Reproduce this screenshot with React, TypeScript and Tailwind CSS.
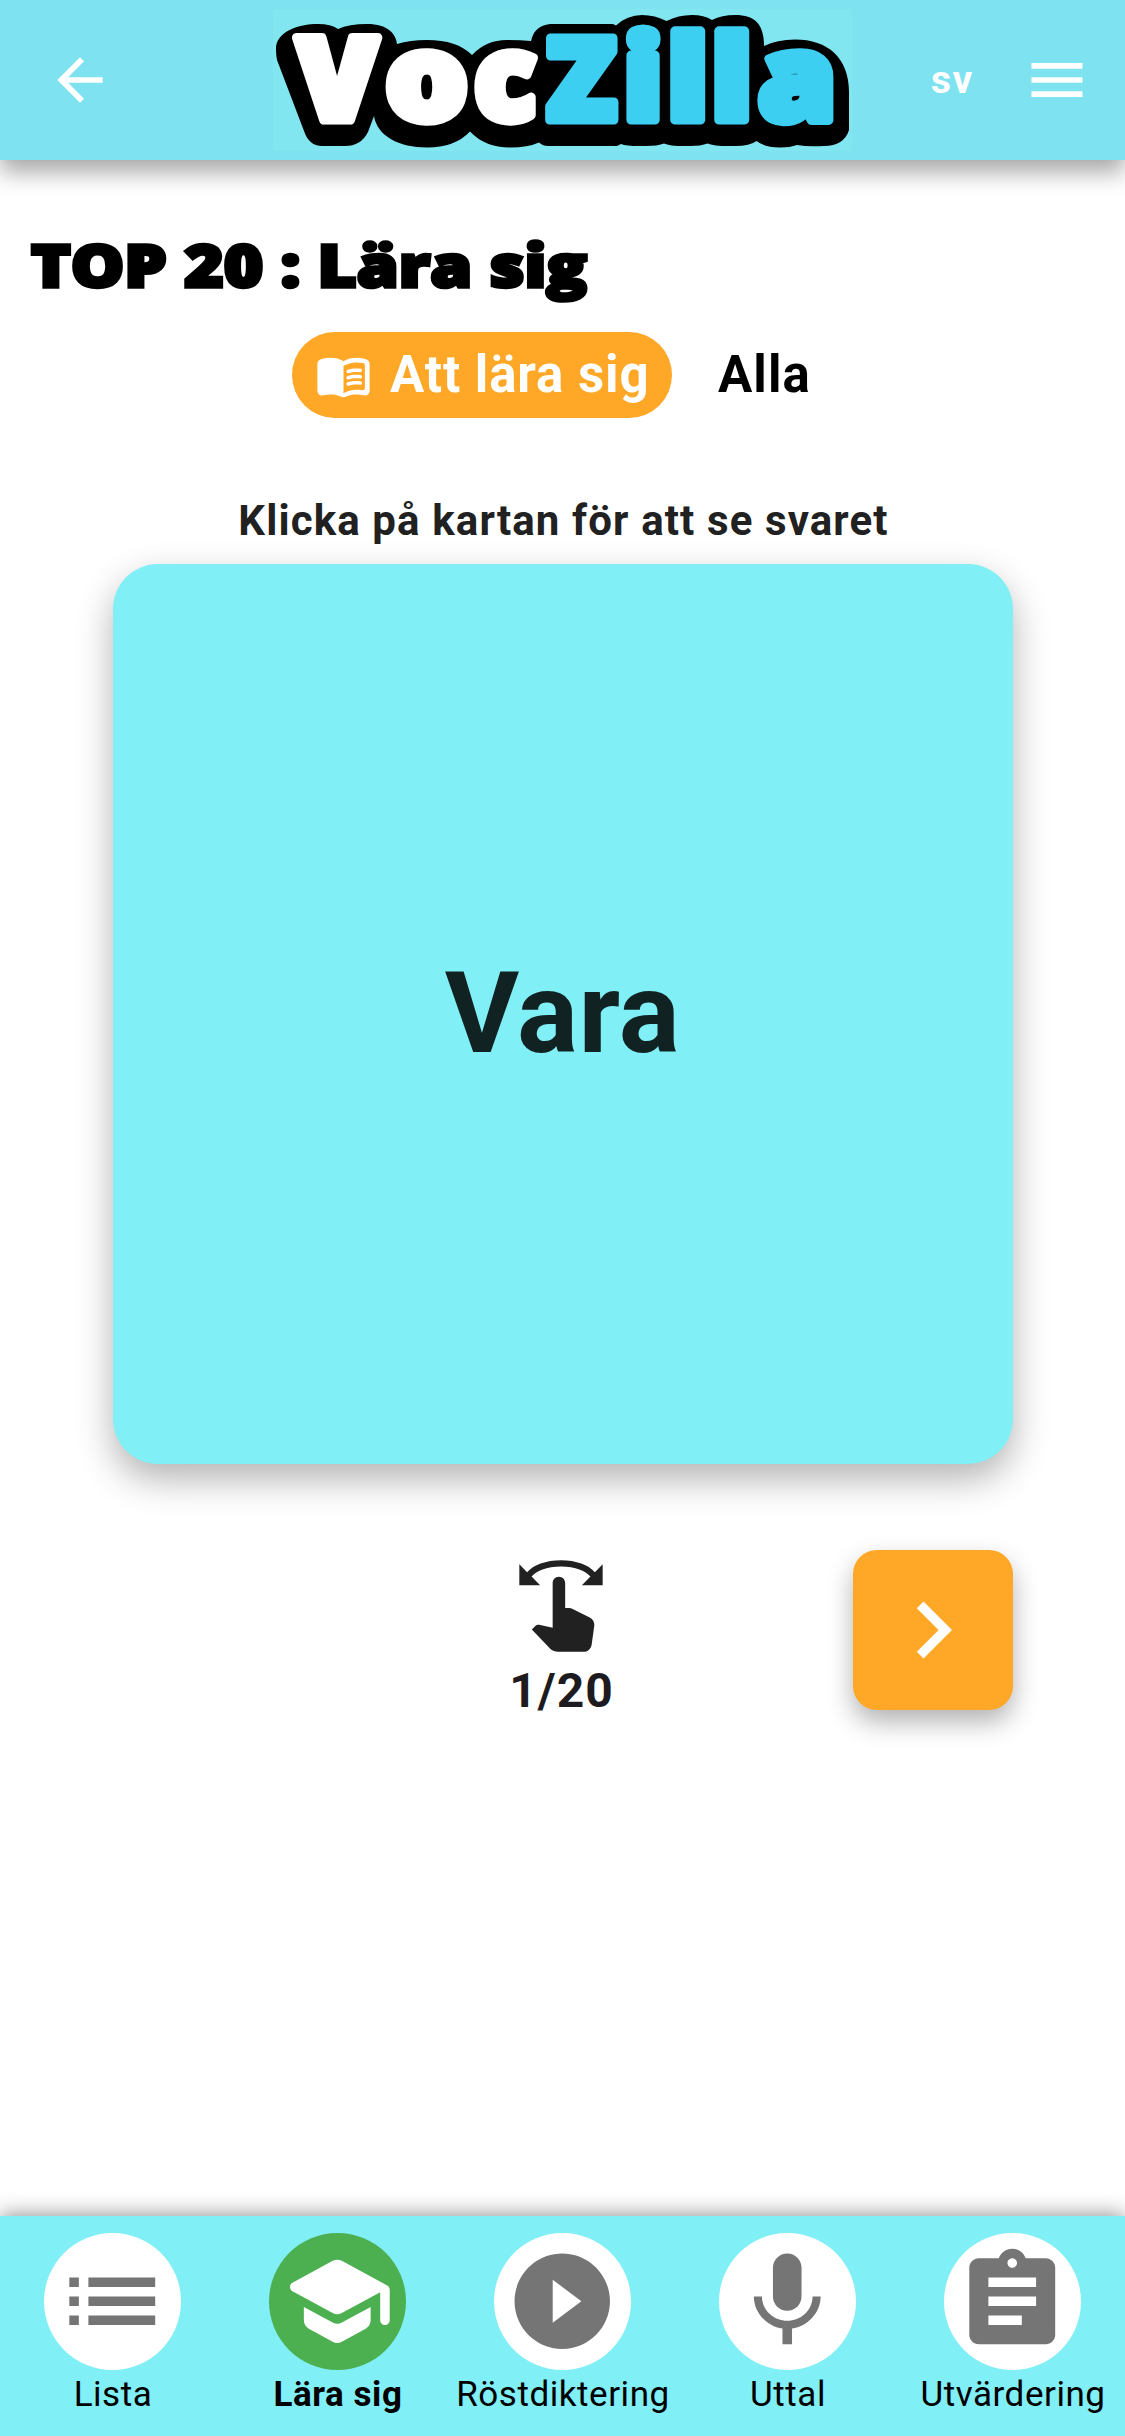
import React from 'react';
import {
  MdArrowBack,
  MdAssignment,
  MdList,
  MdMenu,
  MdMic,
  MdNavigateNext,
  MdPlayCircleFilled,
  MdSwipe,
} from 'react-icons/md';

type IconProps = { className?: string };

const logoLetters = [
  { char: 'V', x: 296.5, sx: 1.014, sy: 1, fill: '#ffffff' },
  { char: 'o', x: 385.3, sx: 1.128, sy: 1.03, fill: '#ffffff' },
  { char: 'c', x: 473.9, sx: 1, sy: 1.03, fill: '#ffffff' },
  { char: 'Z', x: 546.2, sx: 1, sy: 1, fill: '#3ccff2' },
  { char: 'i', x: 623.1, sx: 1.07, sy: 1.01, fill: '#3ccff2' },
  { char: 'l', x: 666.7, sx: 1.125, sy: 1.02, fill: '#3ccff2' },
  { char: 'l', x: 710.7, sx: 1.125, sy: 1.02, fill: '#3ccff2' },
  { char: 'a', x: 757.7, sx: 1.095, sy: 1.03, fill: '#3ccff2' },
];

const logoBacking =
  'M276 50C275 32 298 24 318 24Q331 24 338 29Q349 24 367 24C388 24 396 34 397 44Q410 40 427 40C447 40 462 45 472 55Q486 40 507 40Q520 40 531 41Q534 26 550 24H613L616 25.5Q627 15 642 15Q655 15 666.5 21Q678 15 692 15Q704 15 712 20Q722 15 735 15C755 15 764 24 764 46Q777 39.5 795 39.5C828 39.5 849 58 849 92V130Q844 146 824 146Q808 147 797 145Q790 147.5 780 147.5Q765 147.5 756.5 141Q750 146 735 146Q714 146.5 707.5 143.5Q701 146 690 146Q670 146.5 664 143.5Q658 146 645 146Q627 146.5 621 144L617 146H548Q543 146 539 142.5Q528 147.5 510 147.5Q485 147.5 470 131.5Q455 147.5 427 147.5C399 147.5 377 136 374 116L368 132Q361 146 345 146H322Q309 146 304 131L277 60Q276 55 276 50Z';

function Logo() {
  return (
    <svg
      viewBox="273 9 579 142"
      className="h-[142px] w-[579px] overflow-visible bg-[#82e6f1] font-['Open_Sans',sans-serif] text-[115.5px] font-extrabold"
      strokeLinejoin="round"
    >
      <path d={logoBacking} />
      {logoLetters.map((l, i) => (
        <text
          key={i}
          transform={`translate(${l.x} 119.5) scale(${l.sx} ${l.sy})`}
          fill={l.fill}
          stroke={l.fill}
          strokeWidth={9}
        >
          {l.char}
        </text>
      ))}
    </svg>
  );
}

function BookIcon({ className }: IconProps) {
  return (
    <svg viewBox="0 0 24 24" fill="currentColor" className={className}>
      <path d="M17.5 4.5c-1.95 0-4.05.4-5.5 1.5-1.45-1.1-3.55-1.5-5.5-1.5-1.45 0-2.99.22-4.28.79C1.49 5.62 1 6.33 1 7.14v11.28c0 1.3 1.22 2.26 2.48 1.94.98-.25 2.02-.36 3.02-.36 1.56 0 3.22.26 4.56.92.6.3 1.28.3 1.87 0 1.34-.67 3-.92 4.56-.92 1 0 2.04.11 3.02.36 1.26.33 2.48-.63 2.48-1.94V7.14c0-.81-.49-1.52-1.22-1.85-1.28-.57-2.82-.79-4.27-.79zM21 17.23c0 .63-.58 1.09-1.2.98-.75-.14-1.53-.2-2.3-.2-1.7 0-4.15.65-5.5 1.5V8c1.35-.85 3.8-1.5 5.5-1.5.92 0 1.83.09 2.7.28.46.1.8.51.8.98v9.47z" />
      {[0, 2.66, 5.33].map((dy) => (
        <path
          key={dy}
          transform={`translate(0 ${dy})`}
          d="M13.98 11.01c-.32 0-.61-.2-.71-.52-.13-.39.09-.82.48-.94 1.54-.5 3.53-.66 5.36-.45.41.05.71.42.66.83-.05.41-.42.71-.83.66-1.62-.19-3.39-.04-4.73.39-.08.01-.16.03-.23.03z"
        />
      ))}
    </svg>
  );
}

function SchoolIcon({ className }: IconProps) {
  return (
    <svg viewBox="0 0 24 24" fill="currentColor" className={className}>
      <path d="M5 13.18v2.81c0 .73.4 1.41 1.04 1.76l5 2.73c.6.33 1.32.33 1.92 0l5-2.73c.64-.35 1.04-1.03 1.04-1.76v-2.81l-6.04 3.3c-.6.33-1.32.33-1.92 0L5 13.18zm6.04-9.66l-8.43 4.6c-.69.38-.69 1.38 0 1.76l8.43 4.6c.6.33 1.32.33 1.92 0L21 10.09V16c0 .55.45 1 1 1s1-.45 1-1V9.59c0-.37-.2-.7-.52-.88l-9.52-5.19c-.6-.32-1.32-.32-1.92 0z" />
    </svg>
  );
}

const tabs = [
  { label: 'Lista', Icon: MdList, active: false },
  { label: 'Lära sig', Icon: SchoolIcon, active: true },
  { label: 'Röstdiktering', Icon: MdPlayCircleFilled, active: false },
  { label: 'Uttal', Icon: MdMic, active: false },
  { label: 'Utvärdering', Icon: MdAssignment, active: false },
];

export default function App() {
  return (
    <div className="flex h-[2436px] w-[1125px] flex-col overflow-hidden bg-white font-[Roboto,sans-serif]">
      <header className="grid h-[160px] shrink-0 grid-cols-[273px_579px_273px] items-center bg-[#7ee2f0] text-white shadow-[0_12px_22px_rgba(0,0,0,0.35)]">
        <button className="ml-[46px] w-fit">
          <MdArrowBack className="size-[68px]" />
        </button>
        <Logo />
        <div className="flex items-center pl-[79px]">
          <span className="w-[92px] text-[39px] leading-none font-bold tracking-[1.5px]">sv</span>
          <MdMenu className="size-[68px]" />
        </div>
      </header>

      <main className="flex flex-1 flex-col">
        <h1 className="mt-16 ml-[31px] h-20 w-fit origin-left scale-x-[1.16] font-['Open_Sans',sans-serif] text-[58px] leading-[81px] font-extrabold whitespace-nowrap text-black [-webkit-text-stroke:3.5px_#000]">
          TOP 20 : Lära sig
        </h1>

        <div className="mt-7 ml-[292px] flex h-[86px] items-center text-[51px] leading-none font-bold">
          <button className="flex h-full w-[380px] items-center gap-[18px] rounded-full bg-[#ffa726] pl-[23px] tracking-[0.92px] whitespace-nowrap text-white">
            <BookIcon className="size-[57px] shrink-0" />
            <span className="pb-0.5">Att lära sig</span>
          </button>
          <button className="ml-[46px] pb-0.5 tracking-[1.08px] text-black">Alla</button>
        </div>

        <p className="mt-[78px] pl-0.5 text-center text-[42px] leading-[50px] font-bold tracking-[1.12px] text-[#212121]">
          Klicka på kartan för att se svaret
        </p>

        <section className="mx-auto mt-[18px] flex size-[900px] shrink-0 items-center justify-center rounded-[45px] bg-[#80eff6] shadow-[0_15px_36px_rgba(0,0,0,0.3)]">
          <span className="pb-0.5 text-[114px] leading-none font-bold tracking-[0.4px] text-[#112222]">Vara</span>
        </section>

        <div className="mx-auto mt-[86px] grid h-[160px] w-[900px] grid-cols-[160px_1fr_160px]">
          <div className="col-start-2 flex flex-col items-center pt-1.5">
            <MdSwipe className="-ml-[3px] size-[100px] text-[#212121]" />
            <span className="mt-[5px] -ml-0.5 text-[48px] leading-[60px] font-bold tracking-[1px] text-[#1d1b20]">
              1/20
            </span>
          </div>
          <button className="flex size-[160px] items-center justify-center rounded-[24px] bg-[#ffa726] text-white shadow-[0_12px_26px_rgba(0,0,0,0.3)]">
            <MdNavigateNext className="size-[114px]" />
          </button>
        </div>
      </main>

      <nav className="grid h-[220.5px] shrink-0 grid-cols-5 bg-[#80eff6] pt-[17px] shadow-[0_-1px_20px_rgba(0,0,0,0.45)]">
        {tabs.map(({ label, Icon, active }) => (
          <button key={label} className="flex flex-col items-center">
            <span
              className={
                active
                  ? 'flex size-[137.5px] items-center justify-center rounded-full bg-[#4caf50] text-white'
                  : 'flex size-[137.5px] items-center justify-center rounded-full bg-white text-[#757575]'
              }
            >
              <Icon className="size-[114.5px]" />
            </span>
            <span
              className={
                active
                  ? 'mt-[5px] pl-px text-[35px] leading-10 font-bold tracking-[0.55px] whitespace-nowrap text-black'
                  : 'mt-[5px] pl-px text-[35px] leading-10 tracking-[0.55px] whitespace-nowrap text-black'
              }
            >
              {label}
            </span>
          </button>
        ))}
      </nav>
    </div>
  );
}
